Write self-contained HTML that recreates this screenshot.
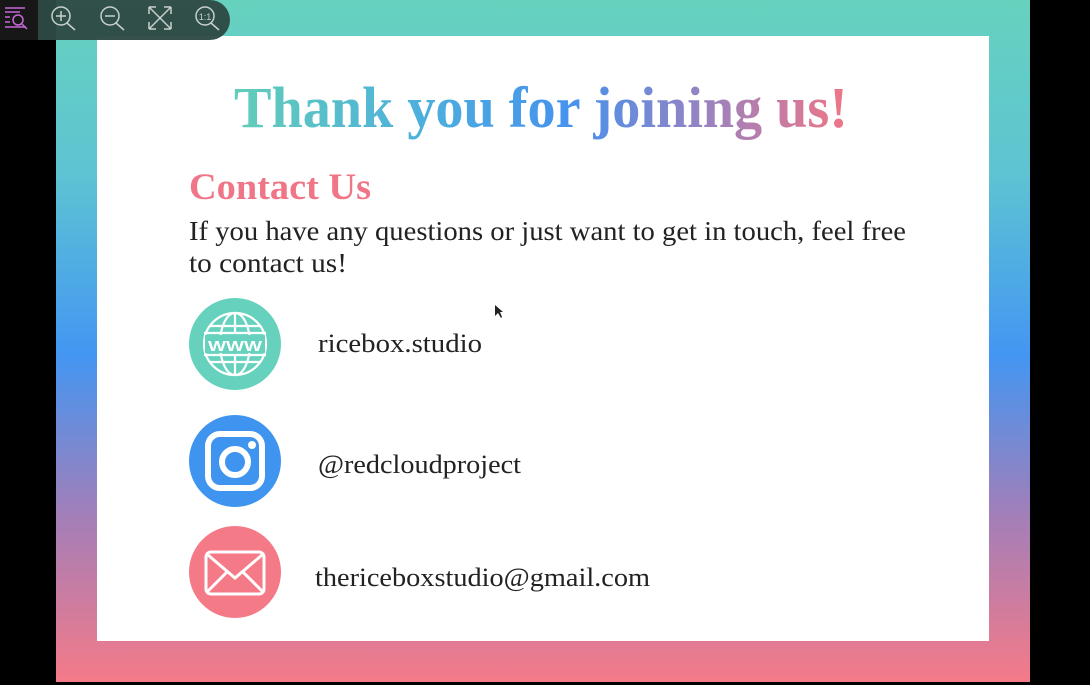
<!DOCTYPE html>
<html><head><style>
html,body{margin:0;padding:0;background:#000;width:1090px;height:685px;overflow:hidden}
</style></head><body>
<svg width="1090" height="685" viewBox="0 0 1090 685" xmlns="http://www.w3.org/2000/svg" style="display:block">
<defs>
<linearGradient id="bg" x1="0" y1="0" x2="0" y2="1">
<stop offset="0" stop-color="#66d2be"/>
<stop offset="0.25" stop-color="#5ec4d2"/>
<stop offset="0.52" stop-color="#4396f2"/>
<stop offset="0.75" stop-color="#a07fba"/>
<stop offset="1" stop-color="#f57a88"/>
</linearGradient>
<linearGradient id="tg" gradientUnits="userSpaceOnUse" x1="234" y1="0" x2="848" y2="0">
<stop offset="0" stop-color="#62cdb9"/>
<stop offset="0.3" stop-color="#4db0dc"/>
<stop offset="0.55" stop-color="#4592ee"/>
<stop offset="0.75" stop-color="#9284c4"/>
<stop offset="1" stop-color="#f07586"/>
</linearGradient>
</defs>
<rect x="56" y="0" width="974" height="682" fill="url(#bg)"/>
<rect x="97" y="36" width="892" height="605" fill="#fff"/>
<g font-family="Liberation Serif, serif">
<text x="234" y="127" font-size="58" font-weight="bold" fill="url(#tg)" textLength="614" lengthAdjust="spacingAndGlyphs">Thank you for joining us!</text>
<text x="189" y="199" font-size="37" font-weight="bold" fill="#f07586" textLength="182" lengthAdjust="spacingAndGlyphs">Contact Us</text>
<text x="189" y="240" font-size="27" fill="#222" textLength="717" lengthAdjust="spacingAndGlyphs">If you have any questions or just want to get in touch, feel free</text>
<text x="189" y="272" font-size="27" fill="#222" textLength="158" lengthAdjust="spacingAndGlyphs">to contact us!</text>
<text x="318" y="352" font-size="26" fill="#222" textLength="164" lengthAdjust="spacingAndGlyphs">ricebox.studio</text>
<text x="318" y="473" font-size="26" fill="#222" textLength="203" lengthAdjust="spacingAndGlyphs">@redcloudproject</text>
<text x="315" y="586" font-size="26" fill="#222" textLength="335" lengthAdjust="spacingAndGlyphs">thericeboxstudio@gmail.com</text>
</g>
<!-- web icon -->
<circle cx="235" cy="344" r="46" fill="#66d2be"/>
<g stroke="#fff" stroke-width="2.2" fill="none">
<circle cx="235" cy="344" r="31"/>
<ellipse cx="235" cy="344" rx="15" ry="31"/>
<line x1="235" y1="313" x2="235" y2="333"/><line x1="235" y1="355" x2="235" y2="375"/>
<line x1="210" y1="326" x2="260" y2="326"/><line x1="210" y1="362" x2="260" y2="362"/>
<line x1="204" y1="333" x2="266" y2="333"/><line x1="204" y1="355" x2="266" y2="355"/>
</g>
<rect x="205" y="335" width="60" height="18" fill="#66d2be"/>
<text x="235" y="351" font-family="Liberation Sans, sans-serif" font-weight="bold" font-size="15" fill="#fff" text-anchor="middle" textLength="54" lengthAdjust="spacingAndGlyphs">WWW</text>
<!-- instagram -->
<circle cx="235" cy="461" r="46" fill="#3f94f0"/>
<rect x="208" y="434" width="54" height="54" rx="12" stroke="#fff" stroke-width="6" fill="none"/>
<circle cx="235" cy="462" r="13" stroke="#fff" stroke-width="6" fill="none"/>
<circle cx="252" cy="445" r="4" fill="#fff"/>
<!-- mail -->
<circle cx="235" cy="572" r="46" fill="#f57a88"/>
<rect x="206" y="552" width="58" height="42" rx="5" stroke="#fff" stroke-width="3" fill="none"/>
<path d="M208 555 L235 578 L262 555 M208 591 L227 572 M262 591 L243 572" stroke="#fff" stroke-width="3" fill="none"/>
<!-- toolbar -->
<path d="M0 0 H210 A20 20 0 0 1 230 20 A20 20 0 0 1 210 40 H0 Z" fill="#2e4a44" opacity="0.96"/>
<rect x="0" y="0" width="38" height="40" fill="#171717"/>
<g stroke="#c867d8" stroke-width="1.5" fill="none">
<path d="M5 8 H25 M5 12 H20 M5 17 H10 M5 22 H10 M5 27 H26"/>
<circle cx="18" cy="20" r="5"/><line x1="22" y1="24" x2="27" y2="29"/>
</g>
<g stroke="#c8d0ce" stroke-width="1.5" fill="none">
<circle cx="61" cy="16" r="9"/><line x1="67" y1="23" x2="75" y2="30"/><path d="M56 16 H66 M61 11 V21"/>
<circle cx="110" cy="16" r="9"/><line x1="116" y1="23" x2="124" y2="30"/><path d="M105 16 H115"/>
<path d="M149 7 L171 29 M171 7 L149 29 M149 7 H156 M149 7 V14 M171 7 H164 M171 7 V14 M149 29 H156 M149 29 V22 M171 29 H164 M171 29 V22"/>
<circle cx="205" cy="16" r="9"/><line x1="211" y1="23" x2="219" y2="30"/>
</g>
<text x="205" y="20" font-family="Liberation Sans, sans-serif" font-size="9" fill="#c8d0ce" text-anchor="middle">1:1</text>
<path d="M495 305 L495 316 L498 313 L501 318 L502 317 L500 312 L503 312 Z" fill="#222"/>
</svg>
</body></html>
